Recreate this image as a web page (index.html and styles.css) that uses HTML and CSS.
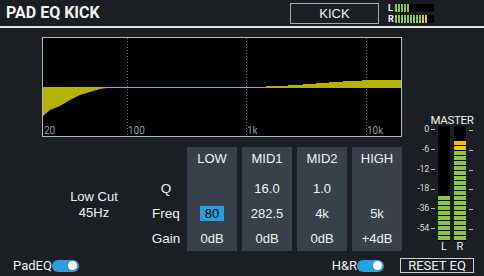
FILE: index.html
```html
<!DOCTYPE html>
<html lang="en">
<head>
    <meta charset="UTF-8">
    <meta name="viewport" content="width=device-width, initial-scale=1.0">
    <title>Pad EQ Kick</title>
    <link rel="stylesheet" href="styles.css">
</head>
<body>
    <header class="topbar">
        <div class="title">PAD EQ KICK</div>
        <div class="pad-name">KICK</div>
        <div class="mini-meter">
            <div class="mini-row">
                <span class="ch">L</span>
                <div class="mini-bar"><div class="mini-grn" style="width:15px"></div></div>
            </div>
            <div class="mini-row">
                <span class="ch">R</span>
                <div class="mini-bar"><div class="mini-grn" style="width:27px"></div><div class="mini-yel" style="width:6px"></div></div>
            </div>
        </div>
    </header>

    <div class="main">
        <div class="eq-area">
            <div class="graph">
                <svg width="358" height="98" viewBox="0 0 358 98">
                    <line class="grid" x1="84.5" y1="0" x2="84.5" y2="98"/>
                    <line class="grid" x1="203.5" y1="0" x2="203.5" y2="98"/>
                    <line class="grid" x1="323.5" y1="0" x2="323.5" y2="98"/>
                    <polygon class="curve" points="0,49 70,49 57,51 47,54 37,57 27,62 17,68 7,72 0,78"/>
                    <polygon class="curve" points="223,49 223,48 245,48 245,47 260,47 260,46 273,46 273,45 286,45 286,44 300,44 300,43 319,43 319,42 358,42 358,49"/>
                    <line class="mid" x1="0" y1="49.5" x2="358" y2="49.5"/>
                    <text class="hz" x="1" y="96">20</text>
                    <text class="hz" x="85" y="96">100</text>
                    <text class="hz" x="204" y="96">1k</text>
                    <text class="hz" x="324" y="96">10k</text>
                </svg>
            </div>

            <div class="eq-row">
                <div class="lowcut">Low Cut<br>45Hz</div>
                <div class="param-names">
                    <div class="cell">Q</div>
                    <div class="cell">Freq</div>
                    <div class="cell">Gain</div>
                </div>
                <div class="bands">
                    <div class="band">
                        <div class="band-head">LOW</div>
                        <div class="cell"></div>
                        <div class="cell"><span class="sel">80</span></div>
                        <div class="cell">0dB</div>
                    </div>
                    <div class="band">
                        <div class="band-head">MID1</div>
                        <div class="cell">16.0</div>
                        <div class="cell">282.5</div>
                        <div class="cell">0dB</div>
                    </div>
                    <div class="band">
                        <div class="band-head">MID2</div>
                        <div class="cell">1.0</div>
                        <div class="cell">4k</div>
                        <div class="cell">0dB</div>
                    </div>
                    <div class="band">
                        <div class="band-head">HIGH</div>
                        <div class="cell"></div>
                        <div class="cell">5k</div>
                        <div class="cell">+4dB</div>
                    </div>
                </div>
            </div>
        </div>

        <div class="master">
            <div class="master-label">MASTER</div>
            <div class="master-meter">
                <div class="scale">
                    <div class="mark">0</div>
                    <div class="mark">-6</div>
                    <div class="mark">-12</div>
                    <div class="mark">-18</div>
                    <div class="mark">-36</div>
                    <div class="mark">-54</div>
                </div>
                <div class="bar">
                    <div class="seg-grn" style="height:45px"></div>
                </div>
                <div class="bar">
                    <div class="seg-yel" style="height:10px"></div>
                    <div class="seg-grn" style="height:90px"></div>
                </div>
                <div class="ticks">
                    <div class="tick"></div>
                    <div class="tick"></div>
                    <div class="tick"></div>
                    <div class="tick"></div>
                    <div class="tick"></div>
                    <div class="tick"></div>
                </div>
            </div>
            <div class="bar-names">
                <span>L</span>
                <span>R</span>
            </div>
        </div>
    </div>

    <footer class="bottombar">
        <div class="switch-group">
            <span>PadEQ</span>
            <div class="toggle"><div class="knob"></div></div>
        </div>
        <div class="switch-group hr">
            <span>H&amp;R</span>
            <div class="toggle"><div class="knob"></div></div>
        </div>
        <div class="reset">RESET EQ</div>
    </footer>
</body>
</html>
```

FILE: styles.css
```css
* {
    margin: 0;
    padding: 0;
    box-sizing: border-box;
}

body {
    width: 484px;
    height: 276px;
    overflow: hidden;
    background-color: #1b1e22;
    color: #f2f2f2;
    font-family: "Liberation Sans", Arial, sans-serif;
    font-size: 13px;
}

/* top bar */
.topbar {
    height: 28px;
    display: flex;
    align-items: flex-start;
    border-bottom: 2px solid #e2e2e2;
    padding-left: 6px;
}

.title {
    width: 284px;
    font-family: Roboto, sans-serif;
    font-weight: bold;
    font-size: 16px;
    line-height: 26px;
}

.pad-name {
    width: 89px;
    height: 21px;
    margin-top: 3px;
    border: 1px solid #a8a8a8;
    text-align: center;
    line-height: 19px;
    font-size: 13px;
}

.mini-meter {
    margin-left: 9px;
    margin-top: 4px;
    display: flex;
    flex-direction: column;
    gap: 3px;
}

.mini-row {
    display: flex;
    height: 8px;
}

.ch {
    width: 7px;
    font-family: Roboto, sans-serif;
    font-weight: bold;
    font-size: 9px;
    line-height: 8px;
}

.mini-bar {
    width: 39px;
    height: 8px;
    background-color: #000;
    display: flex;
}

.mini-grn {
    background: repeating-linear-gradient(to right, #8cc63f 0 2px, transparent 2px 3px);
}

.mini-yel {
    background: repeating-linear-gradient(to right, #f5c400 0 2px, transparent 2px 3px);
}

/* main */
.main {
    height: 227px;
    display: flex;
}

.eq-area {
    width: 412px;
    padding-left: 42px;
}

.graph {
    width: 360px;
    height: 100px;
    margin-top: 9px;
    border: 1px solid #b8b8b8;
    background-color: #000;
}

.graph svg {
    display: block;
}

.grid {
    stroke: #6a6a6a;
    stroke-width: 1;
    stroke-dasharray: 1 2;
}

.curve {
    fill: #b3b300;
}

.mid {
    stroke: #b3b300;
    stroke-width: 1;
}

.hz {
    fill: #9a9a9a;
    font-family: Roboto, sans-serif;
    font-size: 10px;
}

.eq-row {
    display: flex;
    margin-top: 10px;
}

.lowcut {
    width: 104px;
    padding-top: 42px;
    text-align: center;
    line-height: 16px;
}

.param-names {
    width: 40px;
    padding-top: 29px;
    margin-right: 1px;
    text-align: center;
    font-size: 13.5px;
}

.cell {
    height: 25px;
    line-height: 25px;
    text-align: center;
}

.bands {
    display: flex;
    gap: 5px;
}

.band {
    width: 50px;
    height: 104px;
    background-color: #38414a;
}

.band-head {
    height: 23px;
    line-height: 23px;
    margin-bottom: 6px;
    text-align: center;
}

.sel {
    display: inline-block;
    width: 24px;
    height: 15px;
    line-height: 15px;
    background-color: #2a9fe0;
    color: #000;
}

/* master meter */
.master {
    width: 72px;
    padding-top: 86px;
}

.master-label {
    width: 44px;
    margin-left: 18px;
    height: 12px;
    line-height: 12px;
    text-align: center;
    font-family: Roboto, sans-serif;
    font-size: 11.5px;
    letter-spacing: -0.3px;
}

.master-meter {
    display: flex;
    height: 115px;
}

.scale {
    width: 24px;
    margin-right: 2px;
    margin-top: -6px;
}

.mark {
    height: 19.8px;
    line-height: 19.8px;
    text-align: right;
    font-family: Roboto, sans-serif;
    font-size: 9px;
    letter-spacing: -0.3px;
    color: #d8d8d8;
}

.mark::after {
    content: "";
    display: inline-block;
    width: 4px;
    height: 1px;
    margin-left: 2px;
    margin-right: 1px;
    vertical-align: middle;
    background-color: #bbb;
}

.bar {
    width: 12px;
    margin-right: 4px;
    background-color: #000;
    display: flex;
    flex-direction: column;
    justify-content: flex-end;
}

.seg-grn {
    background: repeating-linear-gradient(to top, transparent 0 1px, #8cc63f 1px 5px);
}

.seg-yel {
    background: repeating-linear-gradient(to top, transparent 0 1px, #f5c400 1px 5px);
}

.ticks {
    margin-left: -1px;
    margin-top: 4px;
}

.tick {
    width: 4px;
    height: 1px;
    margin-bottom: 18.8px;
    background-color: #bbb;
}

.bar-names {
    display: flex;
    gap: 4px;
    padding-left: 26px;
    font-family: Roboto, sans-serif;
    font-size: 11px;
    line-height: 12px;
}

.bar-names span {
    width: 12px;
    text-align: center;
}

/* bottom bar */
.bottombar {
    height: 21px;
    display: flex;
    align-items: center;
    padding-left: 13px;
    font-family: Roboto, sans-serif;
    font-size: 13px;
}

.switch-group {
    display: flex;
    align-items: center;
}

.hr {
    margin-left: auto;
}

.toggle {
    width: 27px;
    height: 12px;
    border-radius: 6px;
    background-color: #2a9fe0;
    display: flex;
    justify-content: flex-end;
    align-items: center;
    padding-right: 2px;
}

.knob {
    width: 9px;
    height: 9px;
    border-radius: 50%;
    background-color: #fff;
}

.reset {
    width: 74px;
    height: 15px;
    margin-left: 16px;
    margin-right: 10px;
    border: 1px solid #cfcfcf;
    text-align: center;
    line-height: 13px;
}
```
